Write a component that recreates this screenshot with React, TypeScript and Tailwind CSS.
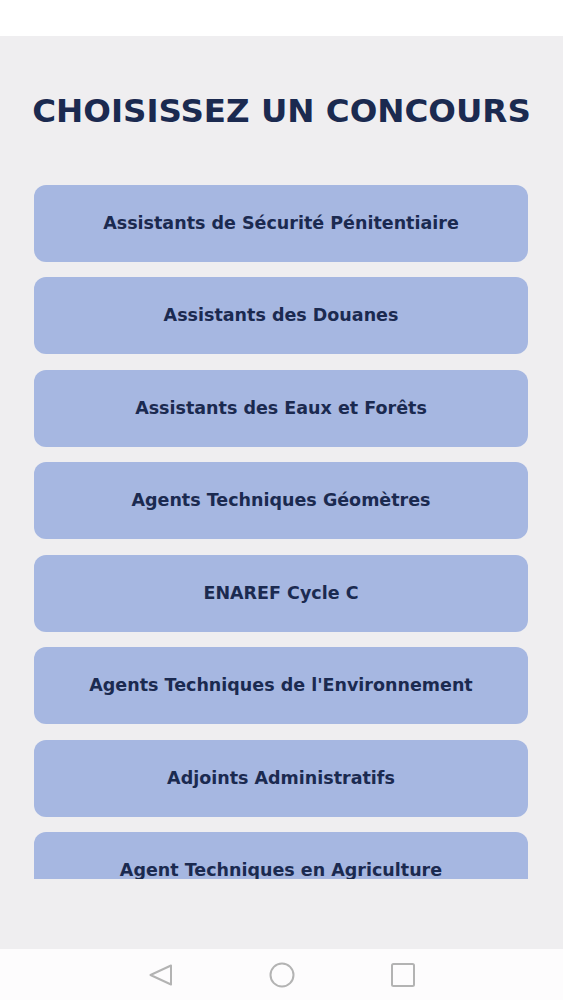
import React from 'react';

const concours = [
  'Assistants de Sécurité Pénitentiaire',
  'Assistants des Douanes',
  'Assistants des Eaux et Forêts',
  'Agents Techniques Géomètres',
  'ENAREF Cycle C',
  "Agents Techniques de l'Environnement",
  'Adjoints Administratifs',
  'Agent Techniques en Agriculture',
];

const NavBar = () => (
  <div className="h-[51px] bg-[#fdfcfd] flex items-center justify-center gap-[96px]">
    <svg width="24" height="24" viewBox="0 0 24 24" fill="none" stroke="#b3b3b3" strokeWidth="2" strokeLinejoin="round">
      <path d="M22 2.5 L1.5 12 L22 21.5 Z" />
    </svg>
    <svg width="26" height="26" viewBox="0 0 26 26" fill="none" stroke="#b3b3b3" strokeWidth="2">
      <circle cx="13" cy="13" r="11.5" />
    </svg>
    <svg width="24" height="24" viewBox="0 0 24 24" fill="none" stroke="#b3b3b3" strokeWidth="2">
      <rect x="1" y="1" width="22" height="22" rx="1.5" />
    </svg>
  </div>
);

export default function App() {
  return (
    <div className="w-[563px] h-[1000px] flex flex-col bg-white" style={{ fontFamily: '"DejaVu Sans", sans-serif' }}>
      <div className="h-[36px] bg-white" />

      <main className="h-[913px] bg-[#efeef0] flex flex-col">
        <h1 className="mt-[59px] text-center text-[32.5px] leading-none font-bold text-[#1b2a50]">
          CHOISISSEZ UN CONCOURS
        </h1>

        <div className="mt-[57px] h-[694px] overflow-hidden pl-[34px] pr-[35px]">
          <div className="flex flex-col gap-[15.5px]">
            {concours.map((label) => (
              <button
                key={label}
                className="h-[77px] shrink-0 rounded-[12px] bg-[#a6b7e1] flex items-center justify-center text-[17.5px] font-bold text-[#1b2a50]"
              >
                {label}
              </button>
            ))}
          </div>
        </div>
      </main>

      <NavBar />
    </div>
  );
}
